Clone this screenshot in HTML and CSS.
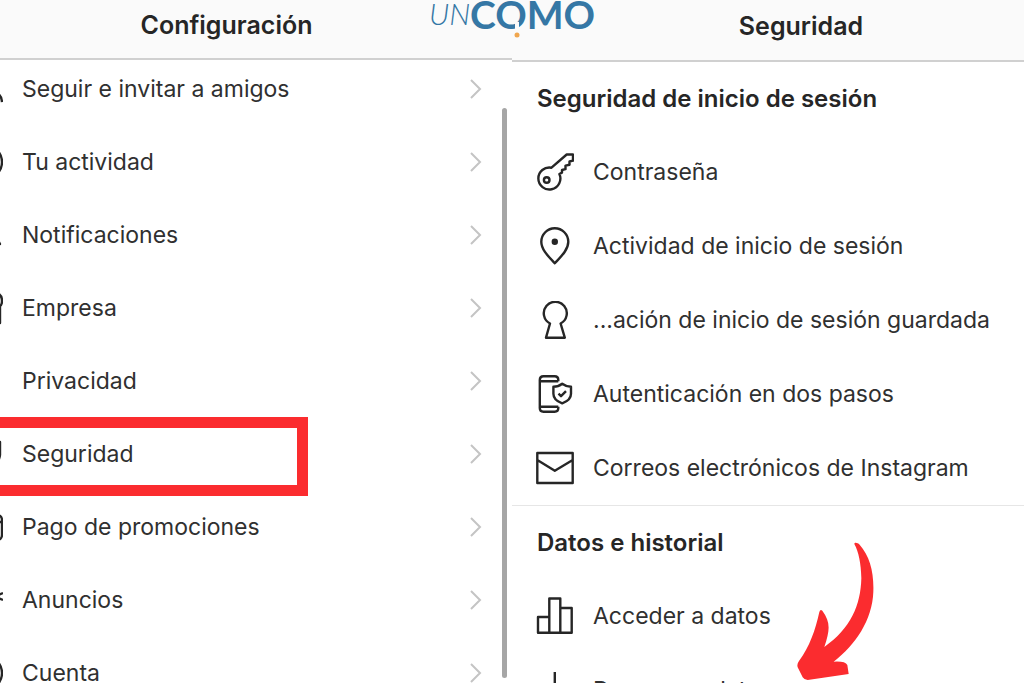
FILE: index.html
```html
<!DOCTYPE html>
<html lang="es">
<head>
  <meta charset="UTF-8">
  <meta name="viewport" content="width=device-width, initial-scale=1.0">
  <title>Configuración - Seguridad</title>
  <link rel="stylesheet" href="styles.css">
</head>
<body>
  <svg class="logo" viewBox="0 0 170 42" role="img" aria-label="unCOMO">
    <text class="logo-un" x="2" y="25">UN</text>
    <text class="logo-como" x="43" y="29">COMO</text>
    <path class="logo-gap" d="M90 22v9"/>
    <circle class="logo-dot" cx="90" cy="35" r="2.5"/>
  </svg>

  <main class="pantallas">
    <section class="panel panel-config">
      <header class="barra">
        <h1>Configuración</h1>
      </header>
      <ul class="menu">
        <li><a href="#">
          <svg class="icono" viewBox="0 0 36 36"><circle cx="22" cy="10" r="8"/><path d="M9 32v-3q0-7 7-7h12q6 0 7 9M1 15h9M5.500 10v10"/></svg>
          <span>Seguir e invitar a amigos</span>
          <svg class="flecha" viewBox="0 0 12 20"><path d="M1 1l9 9-9 9"/></svg>
        </a></li>
        <li><a href="#">
          <svg class="icono" viewBox="0 0 36 36"><circle cx="18" cy="18" r="17"/><path d="M18 8v10l6 5"/></svg>
          <span>Tu actividad</span>
          <svg class="flecha" viewBox="0 0 12 20"><path d="M1 1l9 9-9 9"/></svg>
        </a></li>
        <li><a href="#">
          <svg class="icono" viewBox="0 0 36 36"><path d="M2 27h31l-4-7v-7q-2-10-12-10T6 13v7zM13 29q4 8 8 0"/></svg>
          <span>Notificaciones</span>
          <svg class="flecha" viewBox="0 0 12 20"><path d="M1 1l9 9-9 9"/></svg>
        </a></li>
        <li><a href="#">
          <svg class="icono" viewBox="0 0 36 36"><path d="M5 3h25q5 2 5 8t-5 6q-5 0-6-5-1 5-6 5t-6-5q-1 5-6 5t-5-6 4-8zM4 17v16h29V15"/></svg>
          <span>Empresa</span>
          <svg class="flecha" viewBox="0 0 12 20"><path d="M1 1l9 9-9 9"/></svg>
        </a></li>
        <li><a href="#">
          <svg class="icono" viewBox="0 0 36 36"><rect x="5" y="15" width="25" height="19" rx="3"/><path d="M10 15V9q0-7 8-7t8 7v6"/></svg>
          <span>Privacidad</span>
          <svg class="flecha" viewBox="0 0 12 20"><path d="M1 1l9 9-9 9"/></svg>
        </a></li>
        <li class="marcado"><a href="#">
          <svg class="icono" viewBox="0 0 36 36"><path d="M18 1q7 5 15 5v13q-1 10-15 16Q4 29 3 19V6q8 0 15-5zM11 18l5 5 9-9"/></svg>
          <span>Seguridad</span>
          <svg class="flecha" viewBox="0 0 12 20"><path d="M1 1l9 9-9 9"/></svg>
        </a></li>
        <li><a href="#">
          <svg class="icono" viewBox="0 0 36 36"><rect x="1" y="6" width="34" height="25" rx="5"/><path d="M1 13h34"/></svg>
          <span>Pago de promociones</span>
          <svg class="flecha" viewBox="0 0 12 20"><path d="M1 1l9 9-9 9"/></svg>
        </a></li>
        <li><a href="#">
          <svg class="icono" viewBox="0 0 36 36"><path d="M3 12h8l16-9v29l-16-9H3zM9 23l3 10h5l-3-8M31 13l5-2M31 16l5 2"/></svg>
          <span>Anuncios</span>
          <svg class="flecha" viewBox="0 0 12 20"><path d="M1 1l9 9-9 9"/></svg>
        </a></li>
        <li><a href="#">
          <svg class="icono" viewBox="0 0 36 36"><circle cx="18" cy="18" r="17"/><circle cx="18" cy="14" r="6"/><path d="M7 30q2-7 11-7t11 7"/></svg>
          <span>Cuenta</span>
          <svg class="flecha" viewBox="0 0 12 20"><path d="M1 1l9 9-9 9"/></svg>
        </a></li>
      </ul>
      <div class="scroll"></div>
    </section>

    <section class="panel panel-seguridad">
      <header class="barra">
        <h1>Seguridad</h1>
      </header>
      <div class="grupo">
        <h2>Seguridad de inicio de sesión</h2>
        <ul class="opciones">
          <li><a href="#">
            <svg class="icono" viewBox="0 0 38 38"><path d="M15.500 14.700L30.700 1.500h6.300v6.200l-3.500.8v3.300l-4 .8v3.600l-3.500.8v2.600l-2.600 1.400A11 11 0 1 1 15.500 14.700z"/><circle cx="10.700" cy="27" r="2.800"/></svg>
            <span>Contraseña</span>
          </a></li>
          <li><a href="#">
            <svg class="icono" viewBox="0 0 38 38"><path d="M18.800 36.300C13 30 5.300 23 5.300 14.800a13.500 13.500 0 0 1 27 0C32.300 23 24.500 30 18.800 36.300z"/><circle class="lleno" cx="18.800" cy="14.700" r="2"/></svg>
            <span>Actividad de inicio de sesión</span>
          </a></li>
          <li><a href="#">
            <svg class="icono" viewBox="0 0 38 38"><path d="M14 22.500a11.500 11.500 0 1 1 10.600 0l4.200 14.200H10z"/></svg>
            <span>...ación de inicio de sesión guardada</span>
          </a></li>
          <li><a href="#">
            <svg class="icono" viewBox="0 0 38 38"><path d="M22.300 6.200V5q0-3.700-3.700-3.700H7.500Q3.800 1.300 3.800 5v28q0 3.700 3.700 3.700h11.100q3.700 0 3.700-3.700v-1.200M3.800 6.200h18.500M3.800 31.800h18.500M26.200 8.800q4 3 8.800 3v7q0 6.500-8.800 9.500-8.800-3-8.800-9.500v-7q5 0 8.800-3zM22.500 18.700l2.500 2.500 5-5"/></svg>
            <span>Autenticación en dos pasos</span>
          </a></li>
          <li><a href="#">
            <svg class="icono" viewBox="0 0 38 38"><path d="M1.300 4h35.400v30H1.300zM1.300 11l17.500 10.800L36.700 11"/></svg>
            <span>Correos electrónicos de Instagram</span>
          </a></li>
        </ul>
      </div>
      <div class="grupo">
        <h2>Datos e historial</h2>
        <ul class="opciones">
          <li><a href="#">
            <svg class="icono" viewBox="0 0 38 38"><path d="M2 35.700V20h11.300v15.700zM13.300 35.700V1.500h11v34.200zM24.300 35.700V11h11.400v24.700z"/></svg>
            <span>Acceder a datos</span>
          </a></li>
          <li><a href="#">
            <svg class="icono" viewBox="0 0 38 38"><path d="M18.800 1v24M9 16l9.800 9.800L28.600 16M2 27v9h34v-9"/></svg>
            <span>Descargar datos</span>
          </a></li>
        </ul>
        <svg class="flecha-roja" viewBox="80 36 231 417"><path d="M252 42C252 36 262 38 268 44C298 78 311 125 309 185C306 270 255 345 190 395Q225 393 231 405L235 432L112 450Q102 450 97 442L82 412Q79 402 86 393C118 350 135 300 147 246Q150 236 156 242C180 275 180 298 162 351C242 295 271 225 273 145C272 100 265 65 252 42Z"/></svg>
      </div>
    </section>
  </main>
</body>
</html>
```

FILE: styles.css
```css
* {
  box-sizing: border-box;
}

body {
  margin: 0;
  font-family: Inter, 'Liberation Sans', sans-serif;
  font-size: 23px;
  color: #303030;
  background: #fff;
  height: 100vh;
  overflow: hidden;
}

h1, h2, ul {
  margin: 0;
  padding: 0;
}

h1, h2 {
  font-size: 25px;
  font-weight: 600;
  color: #262626;
}

h2 {
  font-size: 24px;
}

ul {
  list-style: none;
}

a {
  color: inherit;
  text-decoration: none;
  display: flex;
  align-items: center;
  white-space: nowrap;
}

/* logo encima de las dos pantallas */
.logo {
  position: absolute;
  z-index: 2;
  top: 0;
  left: 50%;
  width: 170px;
  height: 42px;
  transform: translateX(-50%);
}

.logo text {
  font-family: Lato, sans-serif;
  fill: #3577a5;
}

.logo .logo-un {
  font-size: 30px;
  font-style: italic;
  font-weight: 300;
}

.logo .logo-como {
  font-size: 39px;
  font-weight: 700;
}

.logo-gap {
  stroke: #fafafa;
  stroke-width: 4;
}

.logo-dot {
  fill: #f0a64e;
}

.pantallas {
  display: flex;
  height: 100%;
}

.panel {
  flex: 1;
  min-width: 0;
  position: relative;
  overflow: hidden;
}

.barra {
  display: flex;
  align-items: center;
  justify-content: center;
  background: #fafafa;
  border-bottom: 2px solid #d0d0d0;
}

.panel-config .barra {
  height: 60px;
  padding: 0 59px 8px 0;
}

.panel-seguridad .barra {
  height: 62px;
  padding: 0 0 8px 66px;
}

.icono {
  flex: none;
  fill: none;
  stroke: #262626;
  stroke-width: 2.4;
  stroke-linejoin: round;
}

.icono .lleno {
  fill: #262626;
}

/* menu de configuracion */
.menu {
  display: flex;
  flex-direction: column;
  gap: 47px;
  padding: 16px 30px 0 0;
}

.menu a {
  height: 26px;
  gap: 19px;
}

.menu span {
  flex: 1;
}

/* los iconos quedan cortados por el borde izquierdo */
.menu .icono {
  width: 36px;
  height: 36px;
  margin-left: -33px;
}

.flecha {
  flex: none;
  width: 12px;
  height: 20px;
  fill: none;
  stroke: #c4c4c4;
  stroke-width: 2;
}

.marcado {
  position: relative;
}

.marcado::after {
  content: "";
  box-sizing: border-box;
  position: absolute;
  top: -24px;
  left: -12px;
  width: 320px;
  height: 79px;
  border: 11px solid #fb2c2f;
}

.scroll {
  position: absolute;
  top: 108px;
  bottom: 5px;
  right: 5px;
  width: 5px;
  border-radius: 3px;
  background: #a6a6a6;
}

/* pantalla de seguridad */
.grupo {
  position: relative;
  padding-left: 24px;
}

.grupo + .grupo {
  border-top: 1px solid #e6e6e6;
}

.grupo h2 {
  line-height: 73px;
  padding-left: 1px;
}

.opciones a {
  height: 74px;
  gap: 19px;
}

.opciones .icono {
  width: 38px;
  height: 38px;
}

.flecha-roja {
  position: absolute;
  top: 36px;
  left: 285px;
  width: 77px;
  height: 139px;
  fill: #fb2c2f;
}
```
